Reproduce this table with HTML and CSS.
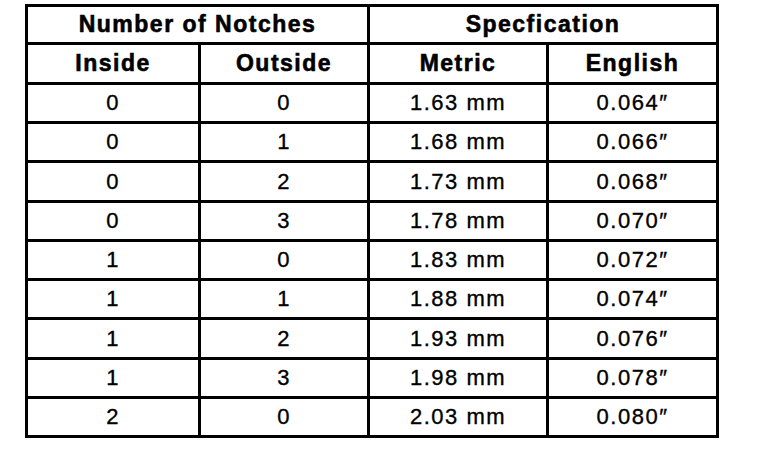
FILE: index.html
```html
<!DOCTYPE html>
<html lang="en">
<head>
    <meta charset="UTF-8">
    <meta name="viewport" content="width=device-width, initial-scale=1.0">
    <title>Shim Notches</title>
    <link rel="stylesheet" href="styles.css">
</head>
<body>
    <div class="sheet">
      <table class="notch-table">
        <colgroup>
          <col class="col-inside">
          <col class="col-outside">
          <col class="col-metric">
          <col class="col-english">
        </colgroup>
        <thead>
          <tr class="head-top">
            <th colspan="2">Number of Notches</th>
            <th colspan="2">Specfication</th>
          </tr>
          <tr class="head-sub">
            <th>Inside</th>
            <th>Outside</th>
            <th>Metric</th>
            <th>English</th>
          </tr>
        </thead>
        <tbody>
          <tr><td>0</td><td>0</td><td>1.63 mm</td><td>0.064&Prime;</td></tr>
          <tr><td>0</td><td>1</td><td>1.68 mm</td><td>0.066&Prime;</td></tr>
          <tr class="tall"><td>0</td><td>2</td><td>1.73 mm</td><td>0.068&Prime;</td></tr>
          <tr><td>0</td><td>3</td><td>1.78 mm</td><td>0.070&Prime;</td></tr>
          <tr><td>1</td><td>0</td><td>1.83 mm</td><td>0.072&Prime;</td></tr>
          <tr><td>1</td><td>1</td><td>1.88 mm</td><td>0.074&Prime;</td></tr>
          <tr class="tall"><td>1</td><td>2</td><td>1.93 mm</td><td>0.076&Prime;</td></tr>
          <tr><td>1</td><td>3</td><td>1.98 mm</td><td>0.078&Prime;</td></tr>
          <tr><td>2</td><td>0</td><td>2.03 mm</td><td>0.080&Prime;</td></tr>
        </tbody>
      </table>
    </div>
</body>
</html>
```

FILE: styles.css
```css
body {
  margin: 0;
  background-color: #fff;
  color: #000;
  font-family: "Liberation Sans", Arial, sans-serif;
}
.sheet {
  padding: 4px 0 0 25px;
}
.notch-table {
  border-collapse: separate;
  border-spacing: 0;
  table-layout: fixed;
  width: 694px;
  border-top: 3px solid #000;
  border-left: 3px solid #000;
}
.col-inside {
  width: 173px;
}
.col-outside {
  width: 169px;
}
.col-metric {
  width: 179px;
}
.col-english {
  width: 170px;
}
.notch-table th,
.notch-table td {
  box-sizing: border-box;
  padding: 0;
  border-right: 3px solid #000;
  border-bottom: 3px solid #000;
  text-align: center;
  vertical-align: middle;
  line-height: 1;
}
.notch-table th {
  font-size: 23px;
  font-weight: bold;
  letter-spacing: 1.5px;
  -webkit-text-stroke: 0.6px #000;
}
.head-top th {
  height: 38px;
}
.head-sub th {
  height: 40px;
}
.notch-table td {
  height: 39px;
  font-size: 22px;
  font-weight: normal;
  letter-spacing: 1.5px;
  -webkit-text-stroke: 0.35px #000;
}
.notch-table .tall td {
  height: 40px;
}
```
